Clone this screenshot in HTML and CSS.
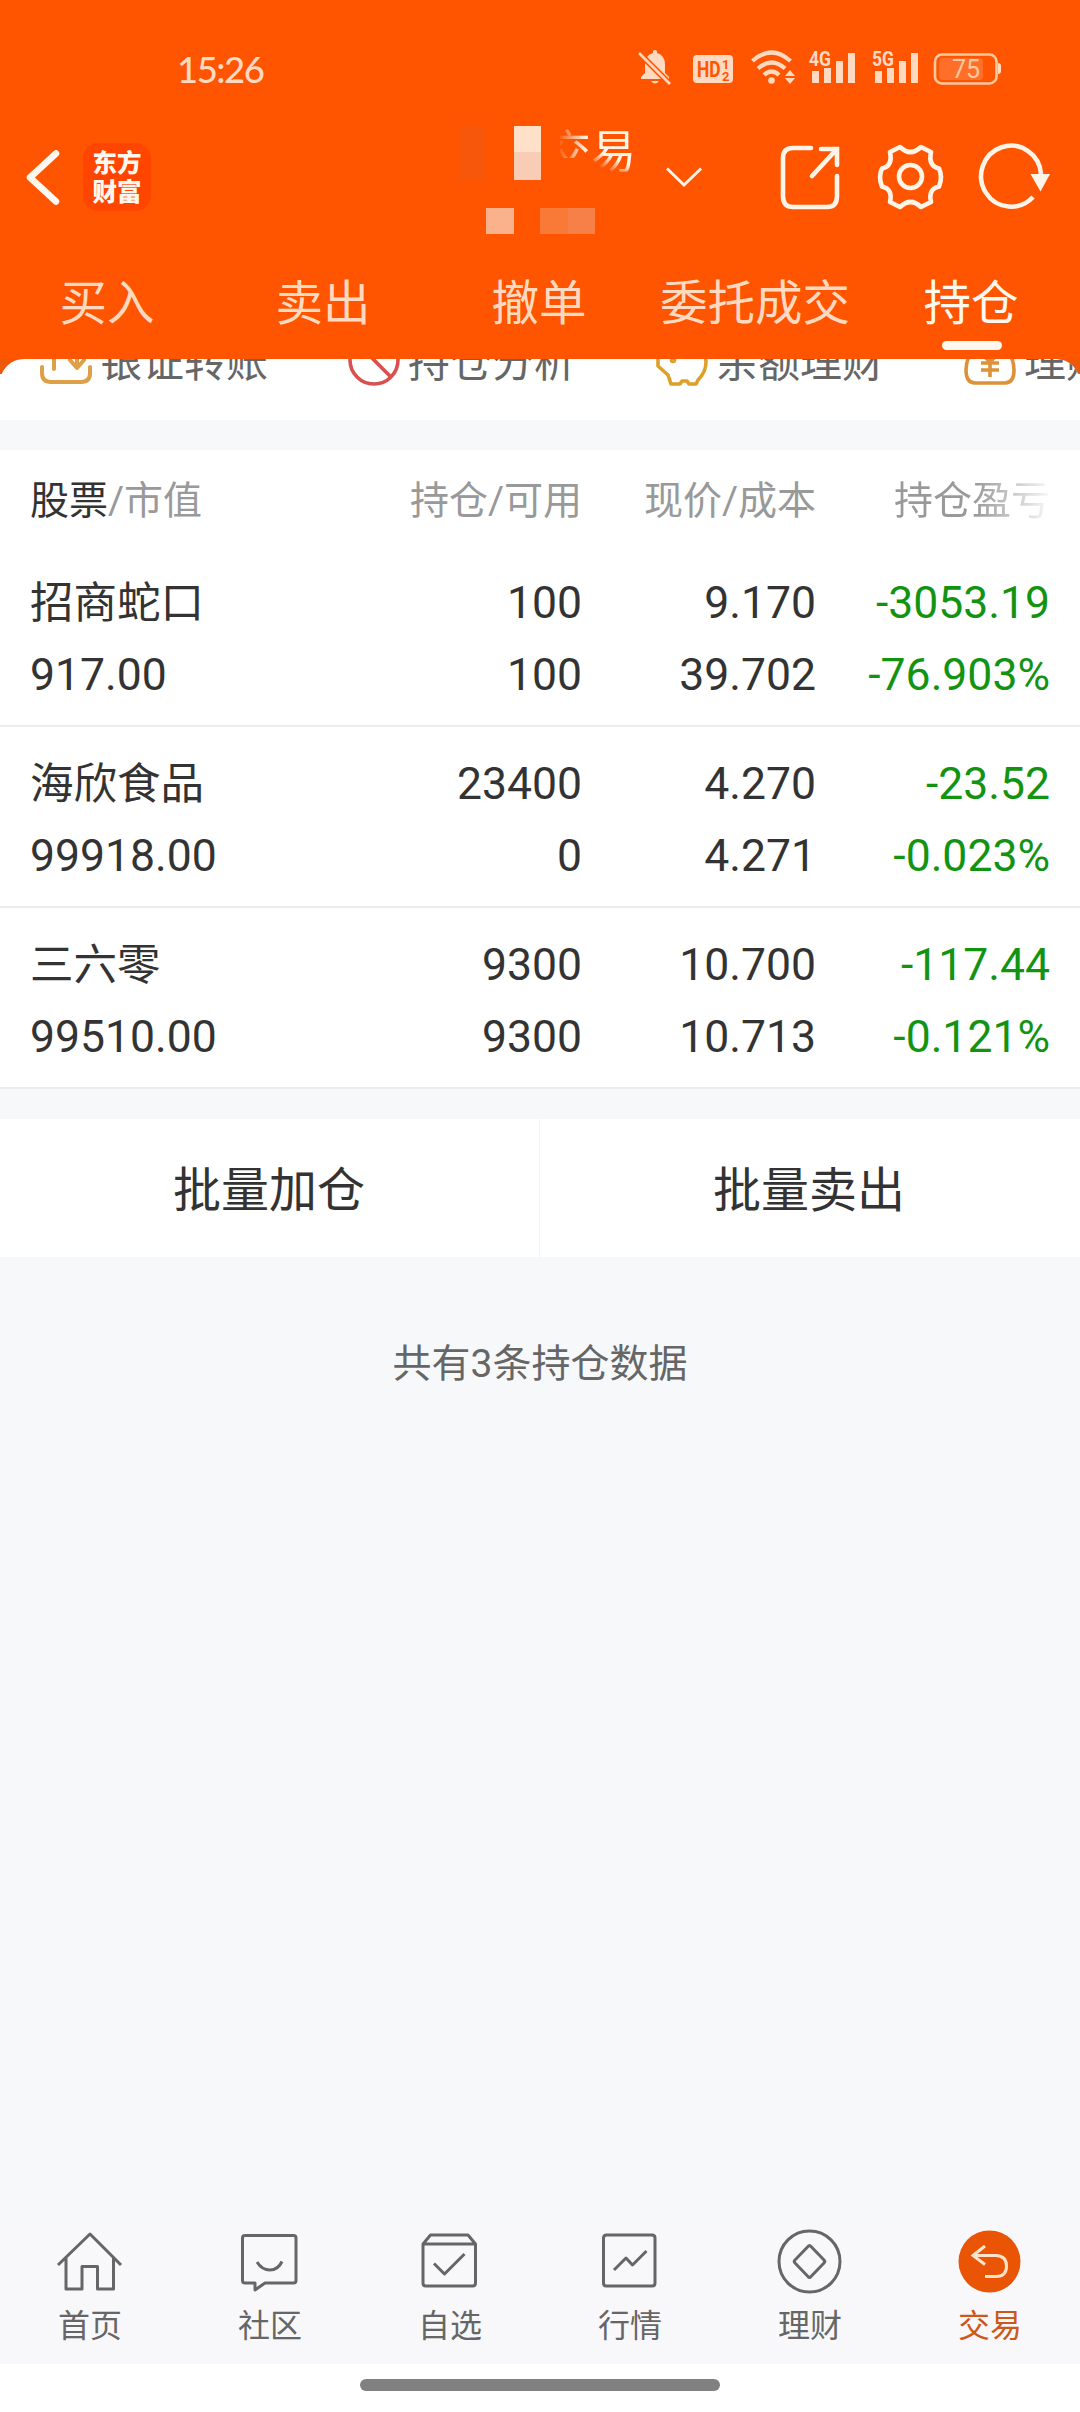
FILE: index.html
```html
<!DOCTYPE html>
<html lang="zh-CN">
<head>
<meta charset="utf-8">
<meta name="viewport" content="width=device-width">
<title>持仓</title>
<link rel="stylesheet" href="styles.css">
</head>
<body>
<div class="screen">
  <header class="header">
    <div class="status">
      <span class="clock">15:26</span>
      <svg class="status-icons" width="380" height="50" viewBox="630 45 380 50">
        <g fill="#ffd9c0">
          <path d="M641 80v-2l4-4V66q0-10 8-12v-2q2-2 4 0v2q8 2 8 12v8l4 4v2zM651 82h8q-4 5-8 0z"/>
          <path d="M639 54l31 31" stroke="#ff5500" stroke-width="6"/>
          <path d="M639 54l31 31" stroke="#ffd9c0" stroke-width="2.6"/>
          <rect x="693" y="56" width="40" height="28" rx="4"/>
          <circle cx="771.500" cy="81.500" r="3.300"/>
          <path d="M785 77l5-6 5 6zM785 79l5 6 5-6z"/>
          <path d="M812 72h7v12h-7zM824 69h7v15h-7zM836 62h7v22h-7zM848 54h7v30h-7z"/>
          <path d="M875 72h7v12h-7zM887 69h7v15h-7zM899 62h7v22h-7zM911 54h7v30h-7z"/>
          <path d="M998 64q3 0 3 3v5q0 3-3 3z"/>
        </g>
        <g fill="none" stroke="#ffd9c0" stroke-width="4.200">
          <path d="M752.500 62q19-17 38 0M758 69.500q13.500-12 27 0M764 76q7.500-7 15 0"/>
        </g>
        <rect x="935" y="55.500" width="61.500" height="29" rx="7" fill="none" stroke="#ffc9a0" stroke-width="2.600"/>
        <rect x="939" y="59" width="44" height="22" rx="4" fill="#ff6f2a"/>
        <g class="status-text">
          <text x="697" y="78" font-size="22" fill="#ff5500" textLength="23.500" lengthAdjust="spacingAndGlyphs">HD</text>
          <text x="722" y="69.500" font-size="13" fill="#ff5500">1</text>
          <text x="722" y="81.500" font-size="13" fill="#ff5500">2</text>
          <text x="809" y="67" font-size="20" fill="#ffd9c0" textLength="22" lengthAdjust="spacingAndGlyphs">4G</text>
          <text x="872" y="67" font-size="20" fill="#ffd9c0" textLength="22" lengthAdjust="spacingAndGlyphs">5G</text>
        </g>
        <text class="battery-text" x="966" y="79" font-size="25" fill="#ffc9a0" text-anchor="middle">75</text>
      </svg>
    </div>
    <div class="titlebar">
      <svg class="back" width="40" height="64" viewBox="24 145 40 64"><path d="M56 153.500L30 177.500L56 201.500" fill="none" stroke="#fff8f0" stroke-width="6.500" stroke-linecap="round" stroke-linejoin="round"/></svg>
      <div class="logo"><span>东方</span><span>财富</span></div>
      <div class="account">
        <div class="account-name"><span class="half">交</span><span class="fade">易</span></div>
        <svg class="mosaic" width="136" height="110" viewBox="460 125 136 110">
          <path fill="#f7570b" d="M460 126h26v54h-26z"/><path fill="#ffe0c8" d="M514 126h27v26h-27z"/><path fill="#f9cdb5" d="M514 152h27v28h-27z"/><path fill="#f9b28c" d="M486 208h28v26h-28z"/><path fill="#f97937" d="M540 208h28v26h-28z"/><path fill="#f68048" d="M568 208h27v26h-27z"/>
        </svg>
      </div>
      <svg class="chevron" width="40" height="24" viewBox="664 164 40 24"><path d="M667 167.500L684 184L701 167.500" fill="none" stroke="#fff4e8" stroke-width="3"/></svg>
      <svg class="actions" width="280" height="72" viewBox="775 141 280 72" fill="none" stroke="#fff4e8" stroke-width="4.600">
        <path d="M811 148H793q-10 0-10 10V196q0 11 10 11h34q10 0 10-11V176" stroke-linecap="round"/>
        <path d="M821 149h16v16M836 150L812 176" stroke-linecap="round"/>
        <path stroke-linejoin="round" d="M890 152L900 147Q910.500 157 921 147L931 152Q928 166 939 168.500Q943 177 939 186.500Q928 189 931 202L921 207Q910.500 197 900 207L890 202Q893 189 882 186.500Q878 177 882 168.500Q893 166 890 152Z"/>
        <circle cx="910.500" cy="176.500" r="11.500"/>
        <path d="M1033 197A30 30.500 0 1 1 1041 174"/>
        <path d="M1030.500 174h19.500l-9.500 17.500z" fill="#fff4e8" stroke="none"/>
      </svg>
    </div>
    <nav class="tabs">
      <span>买入</span><span>卖出</span><span>撤单</span><span>委托成交</span><span class="active">持仓</span>
    </nav>
  </header>

  <section class="shortcut-clip">
    <div class="shortcuts">
      <div class="shortcut"><svg width="52" height="52" viewBox="0 0 52 52" fill="none" stroke="#dda046" stroke-width="4"><path d="M2 33v6q0 9 9 9h30q9 0 9-9V33M14 35V20M37 14v20M30 26l7 8 7-8" stroke-linecap="round" stroke-linejoin="round"/></svg><span>银证转账</span></div>
      <div class="shortcut"><svg width="52" height="52" viewBox="0 0 52 52" fill="none" stroke="#d95050" stroke-width="3.600"><circle cx="26" cy="26" r="24"/><path d="M9 9l34 34"/></svg><span>持仓分析</span></div>
      <div class="shortcut"><svg width="52" height="52" viewBox="0 0 52 52" fill="none" stroke="#dda02b" stroke-width="3.600" stroke-linejoin="round"><path d="M2 20v12l10 9 3 9h9l2-3h5l2 3h7l2-4q8-8 8-18Q48 4 26 4Q8 4 2 20z"/><circle cx="17" cy="26" r="1.500"/></svg><span>余额理财</span></div>
      <div class="shortcut"><svg width="52" height="52" viewBox="0 0 52 52" fill="none" stroke="#dd9138" stroke-width="3.600"><path d="M14 10Q2 22 2 36q0 13 9 13h30q9 0 9-13Q50 22 38 10zM17 29h18M17 36h18M26 26v17M18 20l8 8 8-8"/></svg><span>理财产品</span></div>
    </div>
  </section>

  <section class="holdings">
    <div class="row head">
      <span><b>股票</b>/市值</span><span>持仓/可用</span><span>现价/成本</span><span class="faded">持仓盈亏</span>
    </div>
    <div class="row">
      <span>招商蛇口</span><span>100</span><span>9.170</span><span class="down">-3053.19</span>
      <span>917.00</span><span>100</span><span>39.702</span><span class="down">-76.903%</span>
    </div>
    <div class="row">
      <span>海欣食品</span><span>23400</span><span>4.270</span><span class="down">-23.52</span>
      <span>99918.00</span><span>0</span><span>4.271</span><span class="down">-0.023%</span>
    </div>
    <div class="row">
      <span>三六零</span><span>9300</span><span>10.700</span><span class="down">-117.44</span>
      <span>99510.00</span><span>9300</span><span>10.713</span><span class="down">-0.121%</span>
    </div>
  </section>

  <div class="batch"><span>批量加仓</span><span>批量卖出</span></div>
  <p class="summary">共有3条持仓数据</p>

  <nav class="bottom">
    <div class="item"><svg width="70" height="70" viewBox="55 2227 70 70"><path d="M58 2265L90 2234L121 2265M66 2258V2289H82V2266.500H97.500V2289H113.500V2258"/></svg><span>首页</span></div>
    <div class="item"><svg width="70" height="70" viewBox="235 2227 70 70"><path d="M245 2235.500H293.500Q296 2235.500 296 2238V2280.500Q296 2283 293.500 2283H265L255 2290V2283H245Q242.500 2283 242.500 2280.500V2238Q242.500 2235.500 245 2235.500ZM257 2262Q262 2270 270 2270T282 2261.500"/></svg><span>社区</span></div>
    <div class="item"><svg width="70" height="70" viewBox="415 2227 70 70"><path d="M423 2244L430.500 2235H468L475.500 2244V2283Q475.500 2286 472.500 2286H426Q423 2286 423 2283ZM423 2244H475.500M434 2263.500L444.500 2274L464.500 2254"/></svg><span>自选</span></div>
    <div class="item"><svg width="70" height="70" viewBox="595 2227 70 70"><path d="M606.500 2235H652Q655 2235 655 2238V2283Q655 2286 652 2286H606.500Q603.500 2286 603.500 2283V2238Q603.500 2235 606.500 2235ZM614 2270L626 2258L632.500 2265L646.500 2251"/></svg><span>行情</span></div>
    <div class="item"><svg width="70" height="70" viewBox="775 2227 70 70"><circle cx="809.500" cy="2261.500" r="30.500"/><path d="M808 2246.500Q809.500 2244.500 811 2246.500L824 2260Q825.500 2261.500 824 2263L811 2276.500Q809.500 2278.500 808 2276.500L795 2263Q793.500 2261.500 795 2260Z"/></svg><span>理财</span></div>
    <div class="item active"><svg width="70" height="70" viewBox="955 2227 70 70"><circle class="disc" cx="989.500" cy="2261.500" r="31"/><path class="arrow" d="M985 2246L973 2255.500L985 2264.500M973 2255.500H996Q1006.500 2256 1006.500 2266Q1006.500 2276.500 996 2276.500H985"/></svg><span>交易</span></div>
  </nav>
  <div class="gesture"><i></i></div>
</div>
</body>
</html>
```
FILE: styles.css
```css
* { box-sizing: border-box; }
body { margin: 0; font-family: Roboto, "Noto Sans CJK SC", sans-serif; color: #333; }
.screen { width: 1080px; height: 2412px; display: flex; flex-direction: column; background: #f7f8fa; overflow: hidden; }
svg { display: block; flex: none; }

.header { height: 359px; flex: none; background: #ff5500; }
.status { height: 112px; padding: 29px 70px 3px 177px; display: flex; justify-content: space-between; align-items: center; }
.clock { font: 500 36.500px/50px Lato, sans-serif; letter-spacing: -1.500px; color: #ffd9c0; }
.status-text { font-family: Roboto, sans-serif; font-weight: 700; }
.battery-text { font-family: Roboto, sans-serif; }

.titlebar { height: 130px; padding-left: 24px; display: flex; align-items: center; }
.logo { width: 68px; height: 68px; margin-left: 19px; padding-bottom: 3px; border-radius: 15px; background: #ff4500; color: #fff8f0; font: 900 24.500px/29px "Noto Sans CJK SC", sans-serif; display: flex; flex-direction: column; align-items: center; justify-content: center; }
.account { position: relative; width: 180px; height: 110px; margin: 6px 0 0 309px; }
.mosaic { position: absolute; left: 0; top: 0; }
.account-name { display: flex; justify-content: flex-end; padding-right: 4px; font-size: 45px; line-height: 55px; color: #fff4e8; }
.half { -webkit-mask-image: linear-gradient(90deg, transparent 25%, #000 90%); mask-image: linear-gradient(90deg, transparent 25%, #000 90%); clip-path: inset(0 3px 22px 14px); }
.fade { -webkit-mask-image: linear-gradient(25deg, transparent 22%, #000 42%); mask-image: linear-gradient(25deg, transparent 22%, #000 42%); }
.chevron { margin-left: 24px; }
.actions { margin-left: 71px; }

.tabs { display: grid; grid-template-columns: repeat(5, 216px); height: 117px; text-align: center; font-size: 47.500px; line-height: 125px; color: #ffd9c0; }
.tabs span { margin-left: -1px; margin-right: 1px; }
.tabs .active { color: #fff8f0; position: relative; }
.tabs .active::after { content: ""; position: absolute; left: 79px; top: 99px; width: 60px; height: 9px; border-radius: 5px; background: #fff8f0; }

.shortcut-clip { height: 61px; flex: none; overflow: hidden; background: linear-gradient(#ea5a0a 15px, #fff 15px); }
.shortcuts { display: flex; gap: 79px; height: 61px; padding-left: 40px; background: #fff; border-radius: 24px 24px 0 0; overflow: hidden; }
.shortcut { width: 229px; height: 52px; margin-top: -25px; flex: none; display: flex; align-items: center; gap: 8px; font-size: 42px; line-height: 52px; color: #666; white-space: nowrap; }
.shortcut span { padding-top: 6px; }

.holdings { margin-top: 30px; flex: none; background: #fff; }
.row { display: grid; grid-template-columns: 291px 260px 234px 1fr; grid-auto-rows: 72px; height: 181px; padding: 20.500px 30px 0; border-bottom: 2px solid #ededee; font-size: 44.500px; line-height: 72px; white-space: nowrap; text-align: right; }
.row > :nth-child(2), .row > :nth-child(3), .row > :nth-child(6), .row > :nth-child(7) { margin-right: -1px; }
.row > :nth-child(4n+1) { text-align: left; font-size: 43.500px; line-height: 74px; }
.row > :nth-child(5) { font-size: 44.500px; line-height: 72px; }
.row.head { height: 96px; padding-top: 15px; border: 0; color: #999; font-size: 39px; }
.row.head > :first-child { font-size: 39px; line-height: 72px; }
.head b { color: #333; font-weight: 400; }
.head .faded { color: transparent; background: linear-gradient(90deg, #999 68%, #f8f8f8 100%); -webkit-background-clip: text; background-clip: text; }
.row .down { color: #129412; }

.batch { margin-top: 30px; height: 138px; flex: none; display: grid; grid-template-columns: 1fr 1fr; background: #fff; text-align: center; font-size: 48px; line-height: 143px; }
.batch span { padding-right: 2px; }
.batch span + span { box-shadow: -1px 0 #f5f5f6; }
.summary { margin: 77px 0 0; text-align: center; font-size: 39px; line-height: 60px; color: #666; }

.bottom { margin-top: auto; height: 144px; flex: none; display: grid; grid-template-columns: repeat(6, 180px); background: #f8f8fb; color: #666; }
.item { display: flex; flex-direction: column; align-items: center; padding-top: 7px; font-size: 32px; line-height: 42px; }
.item span { margin-top: 8px; }
.item svg { fill: none; stroke: #666; stroke-width: 3; stroke-linejoin: round; }
.item.active { color: #cf5718; }
.item .disc { fill: #e95504; stroke: none; }
.item .arrow { stroke: #ffe3c9; stroke-linejoin: miter; }
.gesture { height: 48px; flex: none; background: #fff; display: flex; justify-content: center; padding-top: 15px; }
.gesture i { width: 360px; height: 12px; border-radius: 6px; background: #808080; }
```
